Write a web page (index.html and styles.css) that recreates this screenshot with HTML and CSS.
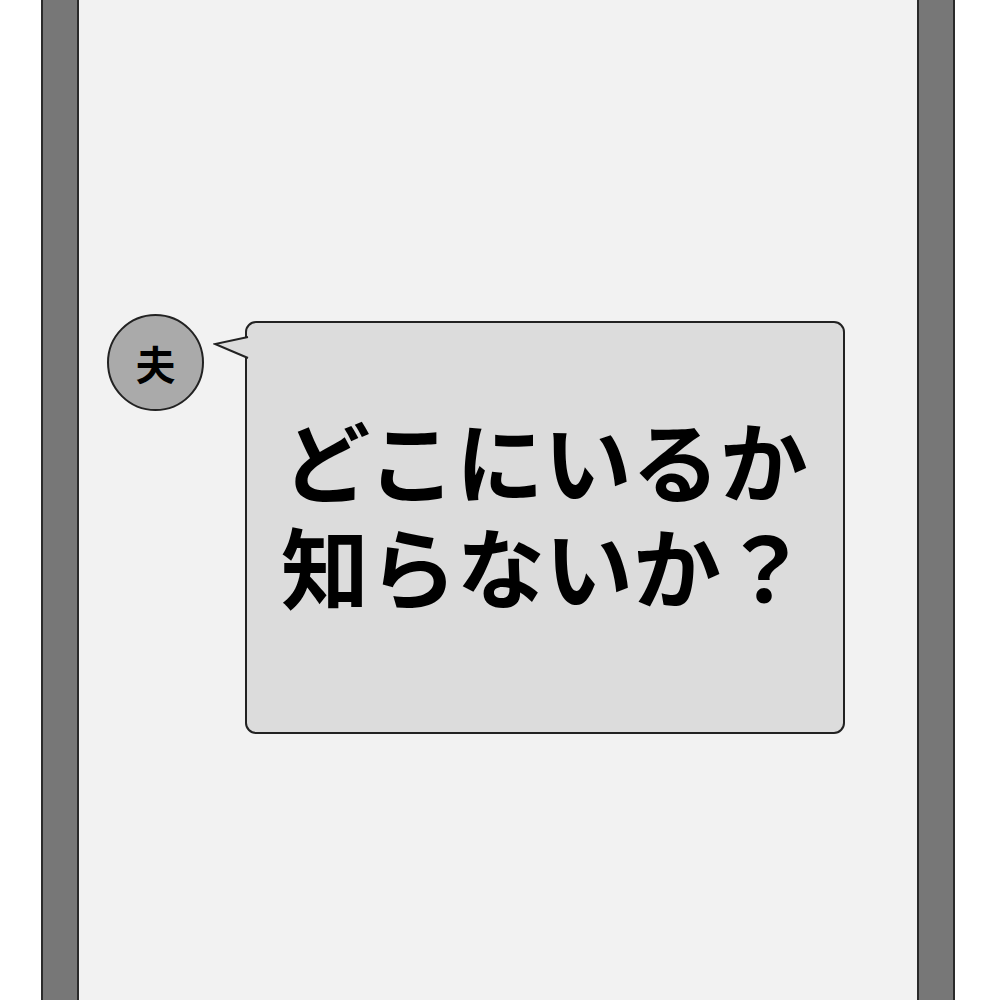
FILE: index.html
```html
<!DOCTYPE html>
<html>
<head>
<title>chat</title>
<link rel="stylesheet" href="styles.css">
</head>
<body>
    <div class="frame">
        <div class="bar"></div>
        <div class="screen">
            <div class="row">
                <div class="avatar">夫</div>
                <div class="bubble">
                    <svg class="tail" width="36" height="26" viewBox="0 0 36 26">
                        <path d="M35 2 L2 9 L35 23" fill="#dcdcdc" stroke="#222" stroke-width="2" stroke-linejoin="miter"/>
                    </svg>
                    <p class="msg">どこにいるか<br>知らないか？</p>
                </div>
            </div>
        </div>
        <div class="bar"></div>
    </div>
</body>
</html>
```

FILE: styles.css
```css
body {
    margin: 0;
    background-color: white;
    font-family: "Noto Sans CJK JP", sans-serif;
}
.frame {
    display: flex;
    height: 1000px;
    padding-left: 41px;
}
.bar {
    width: 34px;
    background-color: #777777;
    border: 2px solid #2a2a2a;
    border-top: none;
    border-bottom: none;
}
.screen {
    width: 838px;
    background-color: #f2f2f2;
}
.row {
    display: flex;
    align-items: flex-start;
    gap: 41px;
    padding-top: 314px;
    padding-left: 28px;
}
.avatar {
    width: 93px;
    height: 93px;
    border: 2px solid #222;
    border-radius: 50%;
    background-color: #aaaaaa;
    display: flex;
    align-items: center;
    justify-content: center;
    font-size: 40px;
    font-weight: 700;
    color: #000;
}
.bubble {
    position: relative;
    margin-top: 7px;
    width: 596px;
    height: 409px;
    border: 2px solid #222;
    border-radius: 11px;
    background-color: #dcdcdc;
}
.tail {
    position: absolute;
    left: -34px;
    top: 12px;
}
.msg {
    margin: 0;
    padding-top: 82px;
    text-align: center;
    font-size: 88px;
    font-weight: 700;
    line-height: 106px;
    color: #000;
}
```
